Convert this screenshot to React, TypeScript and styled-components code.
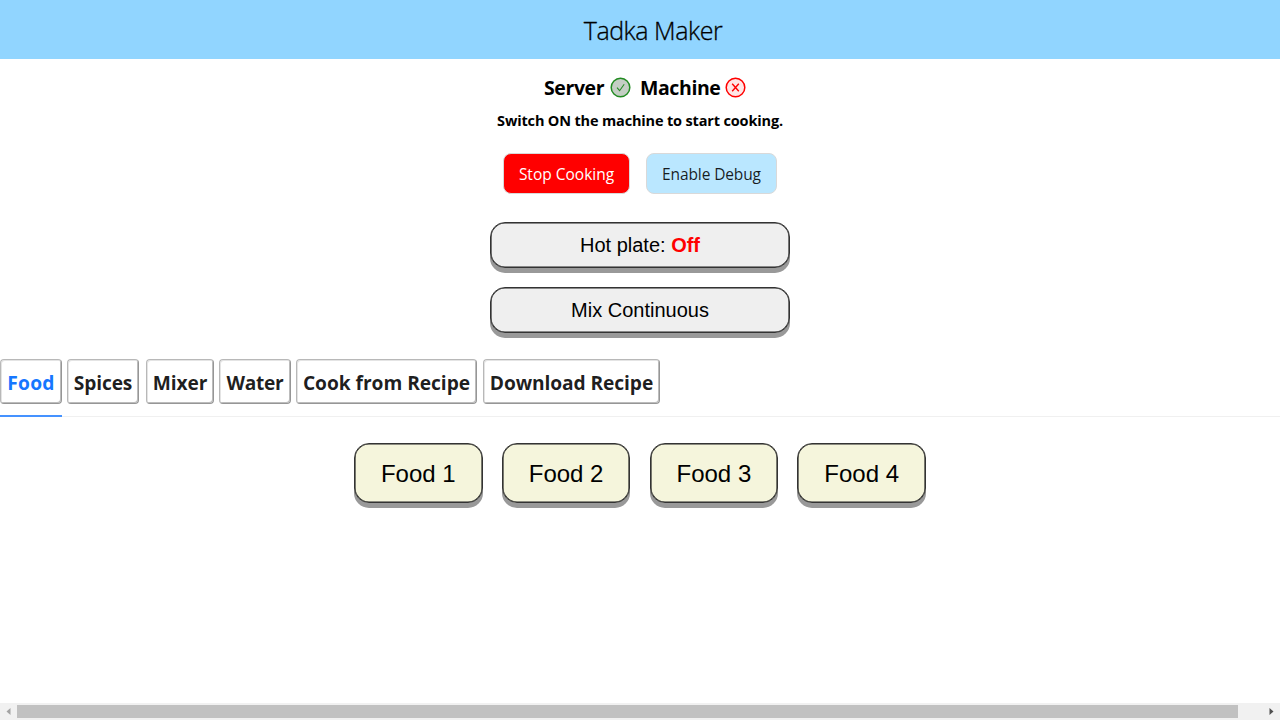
import React from "react";
import styled, { createGlobalStyle } from "styled-components";

const GlobalStyle = createGlobalStyle`
  *, *::before, *::after { box-sizing: border-box; }
  html, body { margin: 0; padding: 0; background: #fff; }
  body { overflow: hidden; color: #000; font-family: "Open Sans", "Noto Sans", sans-serif; }
  button { font: inherit; color: inherit; margin: 0; padding: 0; white-space: nowrap; }
`;

const Page = styled.div`
  width: 1280px;
  height: 720px;
  display: flex;
  flex-direction: column;
  overflow: hidden;
`;

const Header = styled.header`
  height: 59px;
  flex: none;
  display: flex;
  justify-content: center;
  padding: 0 0 0 26px;
  background: #91d5ff;
  font-size: 25px;
  line-height: 61px;
  white-space: nowrap;
`;

const Title = styled.span`
  letter-spacing: -0.45px;
  font-weight: 300;
  -webkit-text-stroke: 0.3px #000;
`;

const StatusRow = styled.div`
  height: 58px;
  flex: none;
  display: flex;
  justify-content: center;
  align-items: center;
  gap: 9px;
  padding-left: 10px;
`;

const Status = styled.div<{ $width: number }>`
  width: ${(p) => p.$width}px;
  display: flex;
  align-items: center;
  justify-content: space-between;
  font-size: 19.5px;
  font-weight: 700;
  letter-spacing: -0.4px;
  line-height: 28px;
  white-space: nowrap;
`;

const StatusIcon = styled.svg`
  width: 21px;
  height: 21px;
  flex: none;
  display: block;
  margin-bottom: 1px;
`;

const Notice = styled.p`
  flex: none;
  margin: -7px 0 0;
  height: 22px;
  line-height: 22px;
  text-align: center;
  font-size: 14.5px;
  font-weight: 700;
  letter-spacing: -0.16px;
`;

const ActionRow = styled.div`
  flex: none;
  display: flex;
  justify-content: center;
  gap: 16px;
  margin-top: 21px;
`;

const ActionButton = styled.button<{ $danger?: boolean }>`
  width: ${(p) => (p.$danger ? 127 : 131)}px;
  height: 41px;
  padding-top: 1px;
  border: 1px solid #d9d9d9;
  border-radius: 8px;
  background: ${(p) => (p.$danger ? "#ff0000" : "#bae7ff")};
  color: ${(p) => (p.$danger ? "#fff" : "rgba(0,0,0,0.88)")};
  font-size: 15.5px;
  letter-spacing: ${(p) => (p.$danger ? 0 : -0.12)}px;
`;

const ControlStack = styled.div`
  flex: none;
  display: flex;
  flex-direction: column;
  align-items: center;
  gap: 19px;
  margin-top: 28px;
`;

const RaisedButton = styled.button<{ $food?: boolean }>`
  width: ${(p) => (p.$food ? 128.6 : 300.8)}px;
  height: ${(p) => (p.$food ? 60 : 46)}px;
  padding-top: ${(p) => (p.$food ? 1 : 0)}px;
  border: 1px solid #333;
  border-radius: 15px;
  background: ${(p) => (p.$food ? "#f5f5dc" : "#efefef")};
  box-shadow: inset 0 0 0 0.6px #222, 0 5px #999;
  font-family: "Liberation Sans", Arial, sans-serif;
  font-size: ${(p) => (p.$food ? 24 : 20)}px;
`;

const Off = styled.strong`
  color: #f00;
`;

const TabBar = styled.nav`
  flex: none;
  height: 58px;
  margin-top: 26px;
  display: flex;
  border-bottom: 1px solid #f0f0f0;
`;

const TabSlot = styled.div<{ $active?: boolean; $width: number; $gap: number }>`
  width: ${(p) => p.$width}px;
  height: 58px;
  flex: none;
  margin-right: ${(p) => p.$gap}px;
  border-bottom: 2px solid ${(p) => (p.$active ? "#4592ff" : "transparent")};
`;

const Tab = styled.button<{ $active?: boolean; $spacing: number }>`
  width: 100%;
  height: 45px;
  display: flex;
  align-items: center;
  justify-content: center;
  padding-top: 2px;
  background: #fff;
  border: 1px solid;
  border-color: #b8b8b8 #969696 #969696 #b8b8b8;
  border-radius: 4px;
  box-shadow: inset 1px 1px 0 #e4e4e4, inset -1px -1px 0 #bcbcbc;
  color: ${(p) => (p.$active ? "#1677ff" : "rgba(0,0,0,0.88)")};
  font-size: 19.2px;
  font-weight: 700;
  letter-spacing: ${(p) => p.$spacing}px;
`;

const FoodRow = styled.div`
  flex: none;
  display: flex;
  justify-content: center;
  gap: 19.2px;
  margin-top: 26px;
`;

const ScrollTrack = styled.div`
  flex: none;
  height: 17px;
  margin-top: auto;
  display: flex;
  align-items: center;
  background: #f1f1f1;
`;

const ScrollThumb = styled.div`
  width: 1221px;
  height: 13px;
  background: #c1c1c1;
`;

const ScrollArrow = styled.svg`
  width: 17px;
  height: 17px;
  flex: none;
`;

const ArrowGap = styled.div`
  flex: 1;
`;

const tabs = [
  { label: "Food", width: 62, gap: 5, spacing: 0.25 },
  { label: "Spices", width: 72, gap: 7, spacing: -0.15 },
  { label: "Mixer", width: 68, gap: 5, spacing: -0.1 },
  { label: "Water", width: 72, gap: 5, spacing: -0.3 },
  { label: "Cook from Recipe", width: 181, gap: 6, spacing: -0.05 },
  { label: "Download Recipe", width: 177, gap: 0, spacing: -0.1 },
];

export default function App() {
  return (
    <Page>
      <GlobalStyle />
      <Header>
        <Title>Tadka Maker</Title>
      </Header>
      <StatusRow>
        <Status $width={87}>
          Server
          <StatusIcon viewBox="0 0 21 21" fill="none" stroke="#228b22">
            <circle cx="10.5" cy="10.5" r="9.3" fill="#c4cec4" strokeWidth="1.5" />
            <path d="M7 10.6l2.6 3.1 4.6-6.4" strokeWidth="1.1" />
          </StatusIcon>
        </Status>
        <Status $width={106}>
          Machine
          <StatusIcon viewBox="0 0 21 21" fill="none" stroke="#ff0000">
            <circle cx="10.5" cy="10.5" r="9.3" fill="#ffe6e6" strokeWidth="1.5" />
            <path d="M7.2 6.8l6.6 7.4M13.8 6.8l-6.6 7.4" strokeWidth="1.4" />
          </StatusIcon>
        </Status>
      </StatusRow>
      <Notice>Switch ON the machine to start cooking.</Notice>
      <ActionRow>
        <ActionButton $danger>Stop Cooking</ActionButton>
        <ActionButton>Enable Debug</ActionButton>
      </ActionRow>
      <ControlStack>
        <RaisedButton>
          Hot plate: <Off>Off</Off>
        </RaisedButton>
        <RaisedButton>Mix Continuous</RaisedButton>
      </ControlStack>
      <TabBar>
        {tabs.map((t, i) => (
          <TabSlot key={t.label} $width={t.width} $gap={t.gap} $active={i === 0}>
            <Tab $active={i === 0} $spacing={t.spacing}>
              {t.label}
            </Tab>
          </TabSlot>
        ))}
      </TabBar>
      <FoodRow>
        {[1, 2, 3, 4].map((n) => (
          <RaisedButton key={n} $food>
            Food {n}
          </RaisedButton>
        ))}
      </FoodRow>
      <ScrollTrack>
        <ScrollArrow viewBox="0 0 17 17">
          <path d="M10.5 5v7L6.5 8.5z" fill="#a3a3a3" />
        </ScrollArrow>
        <ScrollThumb />
        <ArrowGap />
        <ScrollArrow viewBox="0 0 17 17">
          <path d="M6.5 5v7l4-3.5z" fill="#505050" />
        </ScrollArrow>
      </ScrollTrack>
    </Page>
  );
}
